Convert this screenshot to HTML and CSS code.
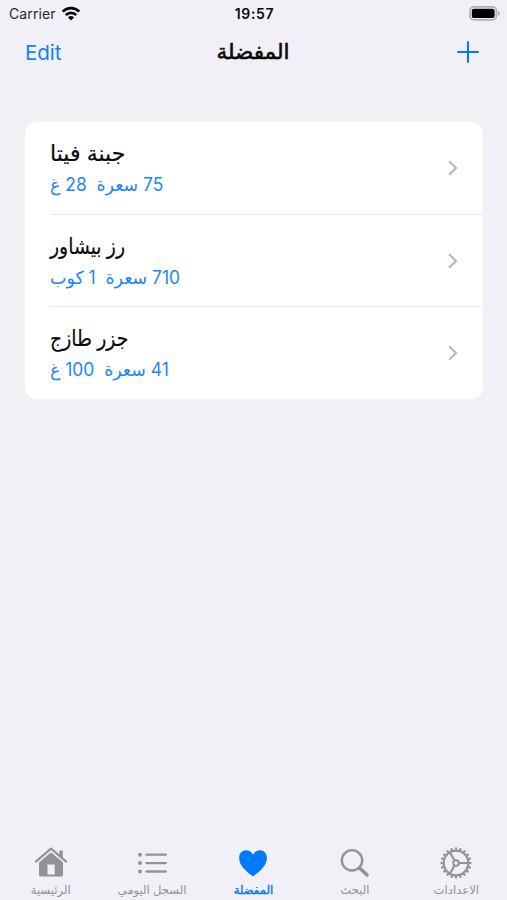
FILE: index.html
```html
<!DOCTYPE html>
<html lang="ar">
<head>
<meta charset="utf-8">
<title>المفضلة</title>
<link rel="stylesheet" href="styles.css">
</head>
<body>
<div class="screen">
  <header class="status">
    <div class="carrier"><span>Carrier</span>
      <svg class="wifi" width="20" height="15" viewBox="0 0 20 15"><g fill="none" stroke="#08080a" stroke-width="2.7"><path d="M1.7 5.6a11.8 11.8 0 0 1 16.6 0"/><path d="M4.8 9a7.4 7.4 0 0 1 10.4 0"/></g><path d="M10 14.6l-3-3.1a4.3 4.3 0 0 1 6 0z" fill="#08080a"/></svg>
    </div>
    <time class="clock">19:57</time>
    <svg class="battery" width="31" height="15" viewBox="0 0 31 15"><rect x="1" y=".9" width="26.4" height="13" rx="4" fill="none" stroke="#b0b0b4" stroke-width="1.8"/><rect x="2.8" y="2.7" width="22.8" height="9.4" rx="2.2" fill="#000"/><path d="M29.1 5.1q1.8.6 1.8 2.3t-1.8 2.3z" fill="#a5a5a9"/></svg>
  </header>
  <nav class="navbar">
    <a class="edit">Edit</a>
    <h1 class="title" dir="rtl">المفضلة</h1>
    <svg class="add" width="22" height="22" viewBox="0 0 22 22"><path d="M11 1v20M1 11h20" fill="none" stroke="#007aff" stroke-width="2" stroke-linecap="round"/></svg>
  </nav>
  <main class="card">
    <div class="row">
      <div class="text"><div class="name wide" dir="rtl">جبنة فيتا</div><div class="detail" dir="rtl">75 سعرة  28 غ</div></div>
      <svg class="chevron" width="10" height="16" viewBox="0 0 10 16"><path d="M1.8 2L8 8l-6.2 6"/></svg>
    </div>
    <div class="row">
      <div class="text"><div class="name" dir="rtl">رز بيشاور</div><div class="detail" dir="rtl">710 سعرة  1 كوب</div></div>
      <svg class="chevron" width="10" height="16" viewBox="0 0 10 16"><path d="M1.8 2L8 8l-6.2 6"/></svg>
    </div>
    <div class="row">
      <div class="text"><div class="name" dir="rtl">جزر طازج</div><div class="detail" dir="rtl">41 سعرة  100 غ</div></div>
      <svg class="chevron" width="10" height="16" viewBox="0 0 10 16"><path d="M1.8 2L8 8l-6.2 6"/></svg>
    </div>
  </main>
  <footer class="tabs">
    <div class="tab">
      <svg width="34" height="34" viewBox="0 0 34 34"><path d="M1.8 15.6L17 2.7l15.2 12.9" fill="none" stroke="currentColor" stroke-width="2.2" stroke-linecap="round" stroke-linejoin="round"/><path d="M25.3 4.5h3.5V12l-3.5-3z" fill="currentColor"/><path fill-rule="evenodd" d="M17 6.3L29 16.5V28a2.6 2.6 0 0 1-2.6 2.6H7.6A2.6 2.6 0 0 1 5 28V16.5zM13.5 18.5v10h7.2v-10z" fill="currentColor"/></svg>
      <span dir="rtl">الرئيسية</span>
    </div>
    <div class="tab">
      <svg width="34" height="34" viewBox="0 0 34 34"><g fill="currentColor"><circle cx="5" cy="8.7" r="2"/><circle cx="5" cy="17.1" r="2"/><circle cx="5" cy="25.5" r="2"/></g><path d="M11.4 8.7h19.4M11.4 17.1h19.4M11.4 25.5h19.4" stroke="currentColor" stroke-width="2.3" stroke-linecap="round"/></svg>
      <span dir="rtl">السجل اليومي</span>
    </div>
    <div class="tab active">
      <svg width="34" height="34" viewBox="0 0 34 34"><path d="M17 30.3C11 26.4 3.1 19.5 3.1 11.9 3.1 7.6 6 4.2 10.1 4.2c3.2 0 5.5 1.8 6.9 4.5 1.4-2.7 3.7-4.5 6.9-4.5 4.1 0 7 3.4 7 7.7 0 7.6-7.9 14.5-13.9 18.4z" fill="currentColor"/></svg>
      <span dir="rtl">المفضلة</span>
    </div>
    <div class="tab">
      <svg width="34" height="34" viewBox="0 0 34 34"><circle cx="14" cy="14.3" r="10.2" fill="none" stroke="currentColor" stroke-width="2.4"/><path d="M21.6 21.9l7.4 7.2" stroke="currentColor" stroke-width="3.5" stroke-linecap="round"/></svg>
      <span dir="rtl">البحث</span>
    </div>
    <div class="tab">
      <svg width="34" height="34" viewBox="0 0 34 34"><g fill="none" stroke="currentColor"><circle cx="17" cy="17" r="12.3" stroke-width="2.2"/><circle cx="17" cy="17" r="14.3" pathLength="80" stroke-width="2.3" stroke-dasharray="2 2" stroke-dashoffset="1"/><circle cx="17" cy="17" r="2.8" stroke-width="1.9"/><path d="M20 17h9M15.5 14.4L10.8 6.3M15.5 19.6l-4.7 8.1" stroke-width="2.1"/></g></svg>
      <span dir="rtl">الاعدادات</span>
    </div>
  </footer>
</div>
</body>
</html>
```
FILE: styles.css
```css
* { box-sizing: border-box; }
body {
  margin: 0;
  background: #f1f0f6;
  font-family: Inter, "DejaVu Sans", sans-serif;
  color: #09090b;
}
.screen { height: 900px; display: flex; flex-direction: column; overflow: hidden; }
svg { display: block; flex: none; }
.status {
  height: 28px;
  padding: 0 7px 0 9px;
  display: grid;
  grid-template-columns: 1fr auto 1fr;
  align-items: center;
}
.carrier { display: flex; align-items: center; gap: 5px; font-size: 14px; letter-spacing: .1px; line-height: 16px; color: #29292c; }
.wifi { margin-top: -2px; }
.clock { font-size: 14px; font-weight: 600; letter-spacing: .7px; margin-top: -2px; }
.battery { justify-self: end; margin-top: -1px; }
.navbar {
  height: 50px;
  padding: 0 28px 0 25px;
  display: grid;
  grid-template-columns: 1fr auto 1fr;
  align-items: center;
}
.edit { font-size: 20.5px; color: #1482f8; margin-top: -1px; }
.title {
  margin: -4px -1px 0 1px;
  font-size: 21.5px;
  font-weight: 400;
  line-height: 28px;
  -webkit-text-stroke: .6px currentColor;
}
.add { justify-self: end; margin-top: -2px; }
.card {
  margin: 44px 24px 0 25px;
  height: 277px;
  border-radius: 12px;
  background: #fff;
  display: grid;
  grid-template-rows: 92px 92px 93px;
}
.row {
  margin-left: 25px;
  padding-right: 25px;
  display: flex;
  align-items: center;
  justify-content: space-between;
}
.row + .row { border-top: 1px solid #e9e9eb; }
.text { display: flex; flex-direction: column; align-items: flex-start; padding-top: 2px; }
.name, .detail { line-height: 32px; white-space: pre; transform-origin: left center; }
.name { font-size: 20px; transform: scale(.94, 1.1); -webkit-text-stroke: .2px currentColor; }
.name.wide { transform: scale(1.1, 1.1); }
.detail { font-size: 18px; color: #1b86f9; transform: scaleX(.967); }
.chevron path { fill: none; stroke: #b9b9bc; stroke-width: 2.4; stroke-linecap: round; stroke-linejoin: round; }
.tabs { margin-top: auto; height: 54px; display: grid; grid-template-columns: repeat(5, 1fr); }
.tab { display: flex; flex-direction: column; align-items: center; color: #919196; }
.tab span { margin-top: 1px; font-size: 11.6px; line-height: 18px; white-space: nowrap; }
.active { color: #007aff; }
.active span { -webkit-text-stroke: .4px currentColor; }
```
